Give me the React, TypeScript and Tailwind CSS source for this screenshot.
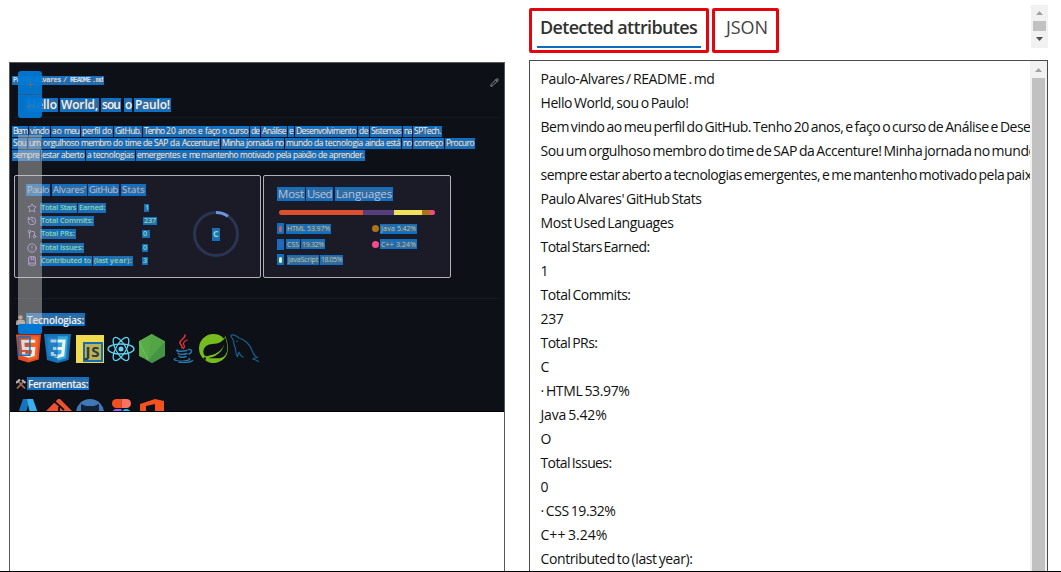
import React, { useLayoutEffect, useRef, useState } from "react";
import { SiSpring } from "react-icons/si";
import { FaJava } from "react-icons/fa";
import { Star, History, GitPullRequest, CircleAlert, BookMarked, Pencil } from "lucide-react";

function Fit({ text, width, rest = "" }: { text: string; width: number; rest?: string }) {
  const ref = useRef<HTMLSpanElement>(null);
  const [spacing, setSpacing] = useState(0);
  useLayoutEffect(() => {
    if (ref.current) setSpacing((width - ref.current.getBoundingClientRect().width) / text.length);
  }, []);
  return (
    <span className="whitespace-pre" style={{ letterSpacing: spacing }}>
      <span ref={ref}>{text}</span>
      {rest}
    </span>
  );
}

type Box = [string, number, number];

/* A run of recognised words; each entry is [text, start, end]. */
function Words({ from, items, className }: { from: number; items: Box[]; className: string }) {
  return (
    <div className={"flex shrink-0 items-stretch leading-none " + className}>
      {items.map(([t, a, b], i) => (
        <span
          key={i}
          className="flex shrink-0 items-center bg-[#0b70c8]"
          style={{ width: b - a, marginLeft: a - (i ? items[i - 1][2] : from) }}
        >
          <span className="ml-px flex h-[72%] items-center bg-[#52687c]/60">
            <Fit text={t} width={b - a - 2} />
          </span>
        </span>
      ))}
    </div>
  );
}

const line1: Box[] = [["Bem", 12, 28], ["vindo", 29, 50], ["ao", 51, 63], ["meu", 63, 80], ["perfil", 81, 101], ["do", 101, 113], ["GitHub.", 114, 142], ["Tenho", 143, 165], ["20", 165, 177], ["anos", 177, 197], ["e", 197, 204], ["faço", 204, 221], ["o", 221, 228], ["curso", 228, 249], ["de", 250, 260], ["Análise", 261, 287], ["e", 288, 294], ["Desenvolvimento", 295, 357], ["de", 358, 369], ["Sistemas", 370, 402], ["na", 403, 412], ["SPTech.", 413, 442]];
const line2: Box[] = [["Sou", 12, 27], ["um", 28, 41], ["orgulhoso", 42, 80], ["membro", 80, 112], ["do", 112, 124], ["time", 124, 142], ["de", 142, 153], ["SAP", 153, 169], ["da", 169, 181], ["Accenture!", 181, 220], ["Minha", 221, 245], ["jornada", 245, 274], ["no", 274, 284], ["mundo", 285, 313], ["da", 313, 324], ["tecnologia", 324, 364], ["ainda", 364, 385], ["está", 385, 401], ["no", 402, 412], ["começo", 413, 444], ["Procuro", 445, 475]];
const line3: Box[] = [["sempre", 12, 40], ["estar", 41, 60], ["aberto", 60, 85], ["a", 86, 92], ["tecnologias", 92, 135], ["emergentes", 136, 181], ["e", 181, 188], ["me", 188, 200], ["mantenho", 200, 239], ["motivado", 239, 275], ["pela", 275, 292], ["paixão", 292, 317], ["de", 317, 328], ["aprender.", 328, 365]];

const stats: { Icon: typeof Star; label: Box[]; value: Box[] }[] = [
  { Icon: Star, label: [["Total", 40, 59], ["Stars", 59, 77], ["Earned:", 78, 106]], value: [["1", 144, 149]] },
  { Icon: History, label: [["Total", 40, 59], ["Commits:", 59, 94]], value: [["237", 143, 157]] },
  { Icon: GitPullRequest, label: [["Total", 40, 59], ["PRs:", 59, 76]], value: [["0", 142, 150]] },
  { Icon: CircleAlert, label: [["Total", 40, 59], ["Issues:", 59, 84]], value: [["0", 142, 148]] },
  { Icon: BookMarked, label: [["Contributed", 40, 83], ["to", 83, 92], ["(last", 93, 109], ["year):", 109, 133]], value: [["3", 142, 148]] },
];

function Html5() {
  return (
    <svg className="h-[29px] w-[25px]" viewBox="0 0 26 29">
      <path d="M0 0h26l-2.4 26L13 29 2.4 26z" fill="#e44d26" />
      <path d="M13 2h10.5l-2 22.5L13 27z" fill="#f16529" />
      <path d="M20 7H7l.7 7.5h10.8l-.6 6.5-4.9 1.5-4.9-1.5-.2-3" fill="none" stroke="#f4ece8" strokeWidth="3.2" />
      <path d="M2.5 2.5h12v19h-12z" fill="#0a67b5" fillOpacity=".12" stroke="#176fb7" strokeWidth="1.5" />
    </svg>
  );
}
function Css3() {
  return (
    <svg className="h-[29px] w-[27px]" viewBox="0 0 27 29">
      <path d="M0 0h27l-2.5 26-11 3L3 26z" fill="#1572b6" />
      <path d="M13.5 2.3H24l-2 22-8.500 2.500z" fill="#33a9dc" />
      <path d="M6.500 7h13.500l-.7 7.500H9m10.300 0-.6 6.500-5.200 1.500-5-1.500-.2-3" fill="none" stroke="#eef3f6" strokeWidth="3.200" />
      <path d="M3 3h10v20L4 22z" fill="#3b94d0" fillOpacity=".4" stroke="#1878c4" strokeWidth="1" />
    </svg>
  );
}
function JsLogo() {
  return (
    <span className="flex h-[28px] w-[28px] items-end justify-end bg-[#f0db4f]">
      <span className="mb-px mr-px flex h-[20px] w-[20px] items-center justify-center border-2 border-[#176cae] bg-[#b9b25a] text-[15px] font-bold leading-none text-[#333a35]">
        <Fit text="JS" width={15} />
      </span>
    </span>
  );
}
function ReactLogo() {
  return (
    <svg className="h-[28px] w-[28px]" viewBox="-14 -14 28 28" fill="none" stroke="#61d4f2" strokeWidth="1.300">
      <ellipse rx="13" ry="5" />
      <ellipse rx="13" ry="5" transform="rotate(60)" />
      <ellipse rx="13" ry="5" transform="rotate(120)" />
      <circle r="2.500" fill="#61d4f2" stroke="none" />
    </svg>
  );
}
function NodeLogo() {
  return (
    <svg className="h-[29px] w-[26px]" viewBox="0 0 26 29">
      <path d="M13 0l13 7.200v14.600L13 29 0 21.800V7.200z" fill="#52a447" />
      <path d="M13 0L0 7.200v14.600l4 2.200z" fill="#5cb047" />
      <path d="M13 0L0 7.200L9 26z" fill="#58ab47" />
      <path d="M26 7.200v14.600L13 29 9 26.500z" fill="#459443" />
      <path d="M0 7.200L9 26.500" stroke="#7cc66a" strokeWidth=".8" />
    </svg>
  );
}
function JavaLogo() {
  return (
    <svg className="h-[29px] w-[22px]" viewBox="0 0 22 29" fill="none" strokeLinecap="round">
      <path d="M13 1c1 3-6 5-5 8 .5 2 3 3 2 5" stroke="#e0303a" strokeWidth="1.600" />
      <path d="M15 6c-3 1.500-4.500 3-3 5 1 1.500.5 2.500-.5 3.500" stroke="#e0303a" strokeWidth="1.300" />
      <path d="M6 16c-5 1 3 2 9 .5M16.500 15.500c4-.5 4 3 .5 4.500M6 19c0 1.500 6 1.800 9 .5M7 22c0 1.500 5 1.500 7 .5" stroke="#2878ad" strokeWidth="1.400" />
      <path d="M4 24.500c-6 1.500 3 3 9 2.300 4-.4 6-1.300 4-2.300M7 28.300c6 .5 12 0 13.500-1.800" stroke="#2878ad" strokeWidth="1.200" />
    </svg>
  );
}
function Dolphin() {
  return (
    <svg className="h-[29px] w-[30px]" viewBox="0 0 30 29" fill="none" stroke="#17618f" strokeWidth="1.200">
      <path d="M29 28c-2-2-4-2.500-6-3 1.500-1 2.500-1.500 4-1.500-3-2-4-4-5-7C20 10 14 5 9 4 6 1 2 0 1 1.500c-.5 1.500 2 3 2.500 5.500.5 3 .5 5 2 7.500.5 3 0 6 2 8 .8-1.500.5-3 1.500-4 1 2.500 2.500 4 4.500 5" />
      <path d="M6.500 6.500l1 1.500" />
    </svg>
  );
}

function Preview() {
  return (
    <div className="relative h-[349px] overflow-hidden border-b border-black bg-[#0d1117] font-['Open_Sans',sans-serif]">
      <div className="flex h-[54px] flex-col pl-[2px] pt-[13px]">
        <div className="flex h-[9px] items-center justify-between pr-[5px]">
          <Words from={12} className="h-[9px] font-['Liberation_Mono',monospace] text-[7px] font-bold text-[#d0dce8]" items={[["Paulo-Alvares", 12, 62], ["/", 62, 69], ["README", 69, 91], [".md", 91, 104]]} />
          <Pencil className="mt-1 h-[9px] w-[9px] text-[#b4b9be]" />
        </div>
        <Words from={12} className="mt-[13px] h-[14px] text-[12px] font-semibold text-[#f0f4f8]" items={[["Hello", 26, 58], ["World,", 60, 99], ["sou", 101, 121], ["o", 124, 132], ["Paulo!", 134, 171]]} />
      </div>
      <div className="mx-[4px] flex h-[58px] flex-col border-t border-[#151a22] pt-[8px] text-[8.5px] text-[#e6eef6]">
        <div className="-ml-[2px] flex flex-col gap-[1px]">
          <Words from={12} className="h-[11px]" items={line1} />
          <Words from={12} className="h-[11px]" items={line2} />
          <Words from={12} className="h-[11px]" items={line3} />
        </div>
      </div>
      <div className="ml-[4px] flex gap-[2px]">
        <div className="flex h-[103px] w-[247px] rounded-xs border border-[#b0b2b6] bg-[#1a1b27]">
          <div className="w-[160px] shrink-0 pt-[8px]">
            <Words from={15} className="h-[12px] text-[9.5px] font-medium text-[#a9c4ee]" items={[["Paulo", 26, 50], ["Alvares'", 52, 87], ["GitHub", 88, 119], ["Stats", 121, 146]]} />
            <div className="mt-[5px] flex flex-col text-[7.5px] font-semibold text-[#6fdccf]">
              {stats.map(({ Icon, label, value }, i) => (
                <div key={i} className="flex h-[13.3px] items-center pl-[12px]">
                  <Icon className="h-[10px] w-[10px] text-[#bf91f3]" />
                  <Words from={37} className="h-[10px]" items={label} />
                  <Words from={label[label.length - 1][2]} className="h-[8px]" items={value} />
                </div>
              ))}
            </div>
          </div>
          <div className="ml-[17px] mt-[34px] grid h-[48px] w-[48px] place-items-center">
            <svg className="col-start-1 row-start-1 h-[48px] w-[48px]" viewBox="-24 -24 48 48" fill="none" strokeWidth="3">
              <circle r="21.500" stroke="#2a3553" />
              <path d="M0 -21.500A21.500 21.500 0 0 1 12 -17.800" stroke="#6d94dc" />
            </svg>
            <div className="col-start-1 row-start-1 text-[9px] font-bold text-[#6be0d0]">
              <Words from={211} className="h-[13px]" items={[["C", 211, 219]]} />
            </div>
          </div>
        </div>
        <div className="h-[103px] w-[188px] rounded-xs border border-[#b0b2b6] bg-[#1a1b27] pt-[11px]">
          <Words from={264} className="h-[14px] text-[11.5px] text-[#a9c4ee]" items={[["Most", 277, 305], ["Used", 306, 333], ["Languages", 335, 393]]} />
          <div className="ml-[15px] mt-[9px] flex h-[5px] w-[156px] overflow-hidden rounded-full">
            <div className="w-[84px] bg-[#de4f2e]" />
            <div className="w-[31px] bg-[#563d7c]" />
            <div className="w-[28px] bg-[#f1e05a]" />
            <div className="w-[8px] bg-[#b07219]" />
            <div className="w-[5px] bg-[#f34b7d]" />
          </div>
          <div className="mt-[6px] flex text-[7px] text-[#b4c8b4]">
            <div className="flex w-[94px] flex-col">
              {([
                ["bg-[#c4625f]", [["HTML", 286, 306], ["53.97%", 306, 331]]],
                ["bg-[#4b5aa5]", [["CSS", 286, 300], ["19.32%", 301, 325]]],
                ["bg-[#f1ee9a]", [["JavaScript", 287, 319], ["18.05%", 320, 343]]],
              ] as [string, Box[]][]).map(([c, items], i) => (
                <div key={i} className="flex h-[15.6px] items-center pl-[13px]">
                  <span className="flex h-[11px] w-[7px] items-center justify-center bg-[#0b6fc4]">
                    <span className={"h-[6px] w-[3px] rounded-full " + c} />
                  </span>
                  <Words from={284} className="h-[10px]" items={items} />
                </div>
              ))}
            </div>
            <div className="flex flex-col">
              {([
                ["bg-[#b07219]", [["Java", 380, 396], ["5.42%", 396, 417]]],
                ["bg-[#f34b8d]", [["C++", 380, 395], ["3.24%", 395, 417]]],
              ] as [string, Box[]][]).map(([c, items], i) => (
                <div key={i} className="flex h-[15.6px] items-center pl-[14px]">
                  <span className={"h-[7px] w-[7px] rounded-full " + c} />
                  <Words from={379} className="h-[10px]" items={items} />
                </div>
              ))}
            </div>
          </div>
        </div>
      </div>
      <div className="mx-[4px] mt-[20px] border-t border-[#161b23] pt-[14px]">
        <div className="flex items-center pl-[2px]">
          <svg className="h-[10px] w-[9px]" viewBox="0 0 9 10">
            <circle cx="4.500" cy="2.500" r="2.300" fill="#b58b78" />
            <path d="M0 10V7q0-2 2-2h5q2 0 2 2v3z" fill="#a59a98" />
          </svg>
          <Words from={25} className="h-[13px] text-[10px] font-semibold text-[#eef3f8]" items={[["Tecnologias:", 26, 85]]} />
        </div>
        <div className="mt-[8px] flex items-center pl-[2px]">
          <Html5 />
          <span className="ml-[3px]"><Css3 /></span>
          <span className="ml-[5px]"><JsLogo /></span>
          <span className="ml-[3px]"><ReactLogo /></span>
          <span className="ml-[4px]"><NodeLogo /></span>
          <span className="ml-[7px]"><JavaLogo /></span>
          <SiSpring className="ml-[5px] h-[29px] w-[29px] text-[#77bc1f]" />
          <span className="ml-[2px]"><Dolphin /></span>
        </div>
        <div className="mt-[14px] flex items-center pl-[2px]">
          <svg className="h-[10px] w-[10px]" viewBox="0 0 10 10" strokeWidth="1.800">
            <path d="M2 2l7 7.500" stroke="#a66b50" />
            <path d="M8 2L1 9.500" stroke="#a66b50" />
            <path d="M0 4l4-3.500M6 1l3.500 3" stroke="#aeb4b9" strokeWidth="2.200" />
          </svg>
          <Words from={26} className="h-[13px] text-[10px] font-semibold text-[#eef3f8]" items={[["Ferramentas:", 27, 89]]} />
        </div>
        <div className="mt-[9px] flex pl-[5px]">
          <svg className="h-[28px] w-[20px]" viewBox="0 0 20 28">
            <path d="M4 0h7L5 20H-3z" fill="#1673bd" />
            <path d="M8 0h6l7 20H12z" fill="#38b0ec" />
          </svg>
          <svg className="ml-[7px] h-[28px] w-[26px]" viewBox="0 0 26 28">
            <path d="M13 -1l13 13-13 13L0 12z" fill="#ee5132" />
            <path d="M8 2l10 9M13 8v12" stroke="#0d1117" strokeWidth="1.800" />
          </svg>
          <svg className="ml-[4px] h-[28px] w-[28px]" viewBox="0 0 28 28">
            <circle cx="14" cy="14" r="14" fill="#4078b5" />
            <path d="M5 14V5l5 2h8l5-2v9c0 10-18 10-18-1z" fill="#122238" />
          </svg>
          <svg className="ml-[8px] h-[28px] w-[19px]" viewBox="0 0 19 28">
            <path d="M9.500 0v9H4.500a4.500 4.500 0 010-9z" fill="#f24e1e" />
            <path d="M9.500 0h5a4.500 4.500 0 010 9h-5z" fill="#ff7262" />
            <path d="M9.500 10v9h-5a4.500 4.500 0 010-9z" fill="#a259ff" />
            <circle cx="14.200" cy="14.500" r="4.500" fill="#1abcfe" />
          </svg>
          <svg className="ml-[9px] h-[28px] w-[24px]" viewBox="0 0 24 28">
            <path d="M0 5l15-5 9 2v24l-9 2-15-5 15 2V5L6 7v13l-6 2z" fill="#f4511e" />
          </svg>
        </div>
      </div>

      {/* Zoom control floating over the document */}
      <div className="absolute left-[8px] top-[8px] flex h-[47px] w-[24px] flex-col overflow-hidden rounded-[3px] bg-[#0078d4]/95 text-[#5a6f84]">
        <span className="flex h-[24px] items-center justify-center border-b border-[#2a6090]">
          <svg className="mt-1 h-[7px] w-[7px]" viewBox="0 0 7 7" stroke="currentColor"><path d="M0 3.500h7M3.500 0v7" /></svg>
        </span>
        <span className="flex flex-1 items-center justify-center">
          <svg className="h-[7px] w-[7px]" viewBox="0 0 7 7" stroke="currentColor"><path d="M0 3.500h7" /></svg>
        </span>
      </div>
      <div className="absolute left-[8px] top-[72px] h-[190px] w-[24px] bg-[#c8c8c8]/45" />
      <div className="absolute left-[8px] top-[261px] h-[10px] w-[24px] rounded-[2px] bg-[#0078d4]" />
    </div>
  );
}

const results: [string, number, string?][] = [
  ["Paulo-Alvares / README . md", 174],
  ["Hello World, sou o Paulo!", 148],
  ["Bem vindo ao meu perfil do GitHub. Tenho 20 anos, e faço o curso de Análise e Dese", 490, "nvolvimento de Sistemas na SPTech."],
  ["Sou um orgulhoso membro do time de SAP da Accenture! Minha jornada no mund", 488, "o da tecnologia ainda está no começo. Procuro"],
  ["sempre estar aberto a tecnologias emergentes, e me mantenho motivado pela paix", 491, "ão de aprender."],
  ["Paulo Alvares' GitHub Stats", 161],
  ["Most Used Languages", 133],
  ["Total Stars Earned:", 109],
  ["1", 7],
  ["Total Commits:", 90],
  ["237", 23],
  ["Total PRs:", 57],
  ["C", 9],
  ["· HTML 53.97%", 89],
  ["Java 5.42%", 66],
  ["O", 10],
  ["Total Issues:", 71],
  ["0", 8],
  ["· CSS 19.32%", 75],
  ["C++ 3.24%", 67],
  ["Contributed to (last year):", 152],
];

function Arrow({ down = false, className }: { down?: boolean; className: string }) {
  return (
    <svg className={"h-[4px] w-[7px] shrink-0 " + className} viewBox="0 0 7 4" fill="currentColor">
      <path d={down ? "M0 0h7L3.500 4z" : "M0 4h7L3.500 0z"} />
    </svg>
  );
}

export default function App() {
  return (
    <div className="flex h-[572px] w-[1061px] flex-col overflow-hidden border-b border-black bg-white font-['Open_Sans',sans-serif]">
      <div className="flex min-h-0 flex-1 pl-[9px]">
        <div className="mt-[62px] w-[496px] shrink-0 border border-b-0 border-[#595959]">
          <Preview />
        </div>
        <div className="ml-[24px] flex w-[519px] min-w-0 flex-col">
          <div className="flex h-[60px] shrink-0 justify-between">
            <div className="mt-[8px] flex h-[45px] gap-[3px] text-[18px] leading-[26px] text-[#323130]">
              <div className="w-[180px] rounded-[2px] border-3 border-[#e3060f] px-[5px] pt-[3px]">
                <div className="h-[34px] border-b-2 border-[#0f6cbd] pl-[3px] font-semibold">
                  <Fit text="Detected attributes" width={157} />
                </div>
              </div>
              <div className="w-[67px] rounded-[2px] border-3 border-[#e3060f] pl-[11px] pt-[3px] text-[#444342]">
                <Fit text="JSON" width={42} />
              </div>
            </div>
            <div className="mt-[5px] flex h-[43px] w-[17px] flex-col items-center bg-[#f1f1f1]">
              <Arrow className="mt-[6px] text-[#a3a3a3]" />
              <div className="mt-[6px] h-[10px] w-[13px] bg-[#c1c1c1]" />
              <Arrow down className="mt-[6px] text-[#505050]" />
            </div>
          </div>
          <div className="flex min-h-0 flex-1 border border-b-0 border-[#4a4a4a]">
            <div className="min-w-0 flex-1 overflow-hidden pl-[10.5px] pt-[6px] text-[14px] leading-[24px] text-[#111111] [word-spacing:-1.2px]">
              {results.map(([t, w, rest], i) => (
                <div key={i} className="h-[24px] whitespace-nowrap">
                  <Fit text={t} width={w} rest={rest} />
                </div>
              ))}
            </div>
            <div className="flex w-[17px] flex-col items-center bg-[#f1f1f1]">
              <Arrow className="mt-[7px] text-[#a3a3a3]" />
              <div className="mt-[6px] w-[13px] flex-1 bg-[#c1c1c1]" />
            </div>
          </div>
        </div>
      </div>
    </div>
  );
}
